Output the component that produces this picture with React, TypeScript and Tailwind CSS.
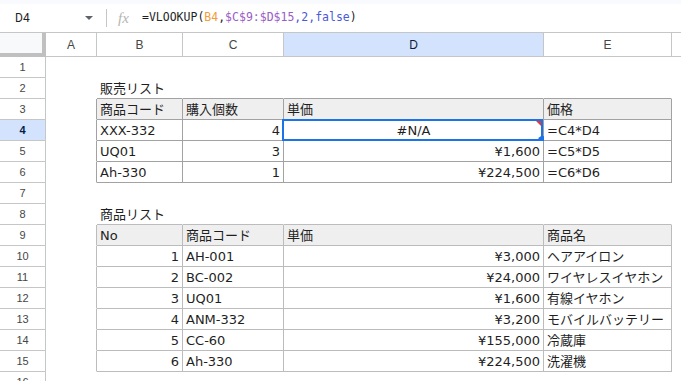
import React from 'react'

type Align = 'l' | 'r' | 'c'
type Cell = { t?: string; a?: Align }

// row number -> cells for columns A..E
const sheet: Record<number, Cell[]> = {
  2: [{}, { t: '販売リスト' }],
  3: [{}, { t: '商品コード' }, { t: '購入個数' }, { t: '単価' }, { t: '価格' }],
  4: [{}, { t: 'XXX-332' }, { t: '4', a: 'r' }, { t: '#N/A', a: 'c' }, { t: '=C4*D4' }],
  5: [{}, { t: 'UQ01' }, { t: '3', a: 'r' }, { t: '¥1,600', a: 'r' }, { t: '=C5*D5' }],
  6: [{}, { t: 'Ah-330' }, { t: '1', a: 'r' }, { t: '¥224,500', a: 'r' }, { t: '=C6*D6' }],
  8: [{}, { t: '商品リスト' }],
  9: [{}, { t: 'No' }, { t: '商品コード' }, { t: '単価' }, { t: '商品名' }],
  10: [{}, { t: '1', a: 'r' }, { t: 'AH-001' }, { t: '¥3,000', a: 'r' }, { t: 'ヘアアイロン' }],
  11: [{}, { t: '2', a: 'r' }, { t: 'BC-002' }, { t: '¥24,000', a: 'r' }, { t: 'ワイヤレスイヤホン' }],
  12: [{}, { t: '3', a: 'r' }, { t: 'UQ01' }, { t: '¥1,600', a: 'r' }, { t: '有線イヤホン' }],
  13: [{}, { t: '4', a: 'r' }, { t: 'ANM-332' }, { t: '¥3,200', a: 'r' }, { t: 'モバイルバッテリー' }],
  14: [{}, { t: '5', a: 'r' }, { t: 'CC-60' }, { t: '¥155,000', a: 'r' }, { t: '冷蔵庫' }],
  15: [{}, { t: '6', a: 'r' }, { t: 'Ah-330' }, { t: '¥224,500', a: 'r' }, { t: '洗濯機' }],
}

const headerRows = [3, 9]
const rows = Array.from({ length: 16 }, (_, i) => i + 1)
const letters = ['A', 'B', 'C', 'D', 'E']

const BR = ['border-r-transparent', 'border-r-[#a2a2a2]', 'border-r-[#bcbcbc]']
const BB = ['border-b-transparent', 'border-b-[#a2a2a2]', 'border-b-[#bcbcbc]']
const ALIGN = { l: 'justify-start', r: 'justify-end', c: 'justify-center' }

function tableAt(r: number, c: number) {
  if (c < 1 || c > 4) return 0
  if (r >= 3 && r <= 6) return 1
  if (r >= 9 && r <= 15) return 2
  return 0
}

const grid = 'grid grid-cols-[46px_51px_86px_101px_260px_128px_1fr]'

function FormulaBar() {
  return (
    <div className="flex items-center h-[29px] border-b border-[#c4c7c5] bg-white">
      <div className="w-[106px] flex items-center pl-[15px] pr-[13px]">
        <span className="text-[12px] text-[#1f1f1f] font-['Roboto',sans-serif]">D4</span>
        <svg className="ml-auto" width="8" height="4" viewBox="0 0 8 4">
          <path d="M0 0h8L4 4z" fill="#5f6368" />
        </svg>
      </div>
      <div className="w-px h-[18px] bg-[#c4c7c5]" />
      <div className="w-[35px] pl-[11px] text-[15px] italic text-[#b4b4b4] font-['Liberation_Serif',serif] leading-none">
        fx
      </div>
      <div className="text-[11.5px] font-['DejaVu_Sans_Mono',monospace] text-[#1f1f1f] whitespace-nowrap">
        =VLOOKUP(<span className="text-[#f29d38]">B4</span>,<span className="text-[#9a5cc6]">$C$9:$D$15</span>
        <span className="text-[#4a5ad8]">,2,false</span>)
      </div>
    </div>
  )
}

function ColumnHeaders() {
  return (
    <div className={`${grid} h-[24px] border-b border-[#c4c7c5] font-['Liberation_Sans',sans-serif] text-[12px]`}>
      <div className="bg-[#f8f9fa] border-r-4 border-b-4 border-[#c0c0c0] -mb-px" />
      {letters.map(l => (
        <div
          key={l}
          className={`flex items-center justify-center border-r border-[#c4c7c5] ${
            l === 'D' ? 'bg-[#d3e3fd] text-[#0b1d3a] font-medium' : 'bg-white text-[#444746]'
          }`}
        >
          {l}
        </div>
      ))}
      <div className="bg-white" />
    </div>
  )
}

function SheetRow({ r }: { r: number }) {
  const cells = sheet[r] ?? []
  const isHeader = headerRows.includes(r)
  return (
    <div className={`${grid} h-[21px]`}>
      <div
        className={`flex items-center justify-center border-r border-b border-[#c4c7c5] text-[11px] font-['Liberation_Sans',sans-serif] ${
          r === 4 ? 'bg-[#d3e3fd] text-[#041e49] font-bold' : 'bg-white text-[#444746]'
        }`}
      >
        {r}
      </div>
      {[0, 1, 2, 3, 4].map(c => {
        const cell = cells[c] ?? {}
        const rb = tableAt(r, c) || tableAt(r, c + 1)
        const bb = tableAt(r, c) || tableAt(r + 1, c)
        const fill = isHeader && c >= 1 ? 'bg-[#efefef]' : 'bg-white'
        return (
          <div
            key={c}
            className={`relative flex items-end pb-[2px] px-[3px] border-r border-b ${BR[rb]} ${BB[bb]} ${fill} ${
              ALIGN[cell.a ?? 'l']
            } text-[13px] leading-[15px] text-[#1f1f1f] font-['DejaVu_Sans','Noto_Sans_CJK_JP',sans-serif] whitespace-nowrap`}
          >
            {cell.t}
            {r === 4 && c === 3 && (
              <div className="absolute -left-[2px] -top-[1px] right-0 -bottom-px border-2 border-[#1a73e8]">
                <div className="absolute top-0 right-0 w-0 h-0 border-l-[5px] border-l-transparent border-t-[5px] border-t-[#e53935]" />
                <div className="absolute -right-[6px] -bottom-[6px] w-[9px] h-[9px] rounded-full bg-[#1a73e8]" />
              </div>
            )}
          </div>
        )
      })}
      <div className="bg-white" />
    </div>
  )
}

export default function App() {
  return (
    <div className="w-[681px] h-[381px] overflow-hidden bg-white">
      <div className="h-[4px] bg-[#f8fafd]" />
      <FormulaBar />
      <ColumnHeaders />
      {rows.map(r => (
        <SheetRow key={r} r={r} />
      ))}
    </div>
  )
}
